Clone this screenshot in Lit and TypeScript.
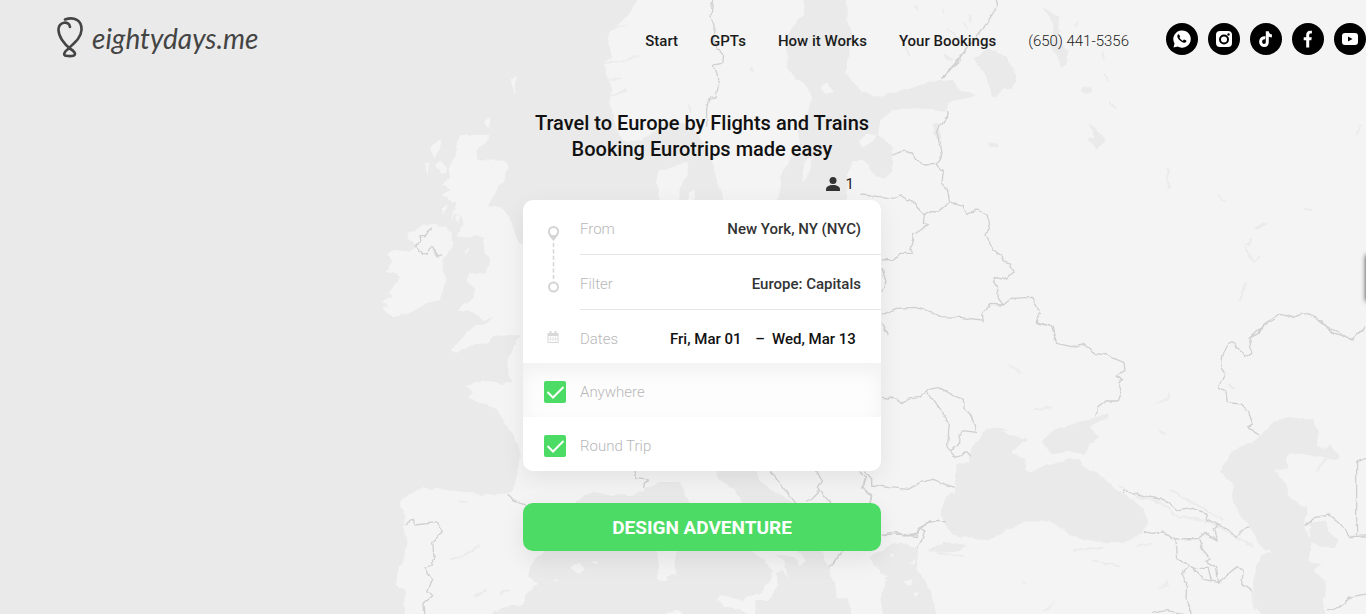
import { LitElement, html, css, svg } from "lit";
import { customElement, state } from "lit/decorators.js";

@customElement("europe-map")
class EuropeMap extends LitElement {
  static styles = css`
    :host { display: block; }
    svg { display: block; width: 100%; height: 100%; }
    .land { fill: #f4f4f4; }
    .sea { fill: #eaeaea; }
    .border { fill: none; stroke: #d0d0d0; stroke-width: 4; stroke-linejoin: round; }
    .relief { fill: #ededed; }
    .ridge { fill: none; stroke: #ebebeb; stroke-width: 6; }
  `;
  render() {
    return html`<svg viewBox="0 0 1366 614" preserveAspectRatio="xMidYMid slice" aria-hidden="true">
      <defs>
        <filter id="coast" x="0" y="0" width="100%" height="100%" filterUnits="objectBoundingBox">
          <feTurbulence type="fractalNoise" baseFrequency="0.11" numOctaves="2" seed="4" result="n" />
          <feDisplacementMap in="SourceGraphic" in2="n" scale="5" xChannelSelector="R" yChannelSelector="G" />
          <feGaussianBlur stdDeviation="0.4" />
        </filter>
      </defs>
      <rect class="sea" width="1366" height="614" />
      <g filter="url(#coast)">
        <rect class="sea" x="-20" y="-20" width="1406" height="654" />
        <path class="land" d="M1386,-20 845,-20 847,20 853,37 845,73 860,90 873,97 893,93 927,82 953,80 960,90 977,96 948,102 945,112 920,108 893,110 880,121 878,135 892,146 892,172 884,180 872,172 865,160 852,160 848,173 847,205 523,330 507,360 509,375 512,380 503,385 485,380 464,387 473,392 468,398 483,403 498,410 505,425 518,443 520,453 517,477 512,493 483,495 470,493 448,490 423,488 410,493 399,502 405,517 403,527 407,543 403,560 397,573 396,587 405,590 403,634 480,634 493,612 510,605 523,605 527,593 537,585 530,577 530,565 542,553 555,530 577,500 594,492 613,495 633,495 647,488 660,482 680,482 688,500 700,520 740,545 753,551 765,562 773,570 770,580 763,590 755,600 770,600 778,585 775,573 783,570 788,580 785,562 775,555 793,556 800,565 806,560 795,548 760,525 742,505 735,490 718,480 715,465 755,465 760,481 773,491 790,501 815,530 822,551 833,580 847,597 857,634 1386,634Z" />
        <path class="land" d="M643,-20 633,10 621,23 613,28 607,38 612,57 603,63 607,77 613,87 610,100 613,117 618,133 627,142 640,140 657,130 673,118 693,128 707,147 712,163 717,180 723,200 730,215 770,215 777,200 783,170 800,147 798,130 813,100 807,87 793,75 787,67 786,37 803,13 805,-20Z" />
        <path class="land" d="M657,182 660,170 687,162 688,173 680,187 678,200 675,215 660,215Z M688,193 695,190 694,203 688,202Z M803,162 812,158 808,175 803,182Z M858,141 866,135 877,134 872,142 862,148Z M820,87 828,83 834,92 825,94Z" />
        <g transform="translate(360 80) scale(.3333)">
          <path class="land" d="M300,165 385,165 380,185 350,210 345,240 435,242 443,260 430,300 400,345 385,380 420,380 445,405 460,450 475,485 560,540 550,640 500,690 490,765 450,765 400,770 385,790 350,792 320,800 290,815 272,812 320,760 345,735 380,735 400,712 370,720 330,695 292,688 340,655 345,620 320,605 325,580 380,580 390,545 370,510 375,475 345,465 320,475 295,465 310,420 285,400 270,430 290,370 245,345 270,330 250,310 270,290 265,260 285,230 290,190Z" />
          <path class="land" d="M150,480 140,460 205,432 260,440 282,490 260,525 245,540 257,600 240,660 200,670 150,700 100,712 65,685 85,680 62,665 100,650 85,640 125,590 80,575 95,545 78,520 105,510 150,515 170,490Z" />
          <path class="land" d="M210,200 245,178 240,205 222,235Z M195,250 207,248 203,285Z M225,255 245,240 262,275 245,285Z M245,385 270,370 250,405Z M285,410 300,405 292,430Z M315,515 330,505 322,527Z M375,125 390,112 388,145Z M455,0 470,-10 465,45Z" />
          <path class="border" d="M212,443 195,470 180,470 183,490 163,495 185,520 203,522 212,500 232,528 246,524" />
        </g>
        <path class="land" d="M658,545 677,545 675,575 669,576 667,581 658,580Z M717,600 722,595 740,600 757,595 755,606 760,630 745,612 725,606Z M570,568 580,563 585,569 580,574Z M590,562 597,561 597,564Z M553,581 557,578 557,581Z M665,614 675,610 684,614Z" />
        <g transform="translate(860 60) scale(.3333)">
          <path class="sea" d="M685,190 705,205 738,240 715,265 682,240 705,232Z M215,195 238,190 245,240 228,235Z M1180,510 1205,485 1222,490 1195,508Z M1155,555 1180,530 1172,555Z" />
          <ellipse class="sea" cx="400" cy="253" rx="15" ry="9" /><ellipse class="sea" cx="680" cy="90" rx="16" ry="11" />
          <path class="ridge" d="M735,40 747,65 M752,125 770,148 M925,325 920,350 930,385 M1155,560 1180,605 1200,585 M1160,670 1140,720 M1075,408 1095,425 M1330,447 1360,450 M1500,195 1490,225" />
          <path class="border" d="M300,0 247,57 M262,152 265,165 230,210 240,260 245,290 228,313 250,335 245,370 258,385 266,425 240,453 215,452 193,465 160,430 120,405 105,415 60,410 0,405 M95,288 135,270 165,290 190,315 228,313 M266,425 310,440 320,460 350,450 382,468 388,505 378,528 400,570 428,590 425,605 450,612 465,635 440,660 405,652 400,665 412,680 415,715 430,735 455,715 515,712 540,755 530,765 535,790 580,800 587,840 M193,465 190,490 203,495 160,525 150,570 158,580 120,580 100,598 66,600 M66,625 78,665 66,695 M66,765 110,745 165,742 220,758 245,770 300,772 365,780 370,790 368,765 390,733 430,735 M66,790 85,825 M1165,838 1200,805 1260,760 1300,772 1330,758 1370,775 1425,820 1475,838 1518,805" />
        </g>
        <g transform="translate(860 0) scale(.3333)">
          <path class="sea" d="M345,180 380,145 440,170 470,230 455,268 435,268 405,292 395,285 380,230Z M545,20 595,50 600,90 590,120 625,150 622,185 600,205 590,165 560,130 582,110 580,70Z M250,160 285,175 265,182Z M595,195 620,180 605,200Z" />
          <path class="ridge" d="M165,15 172,30 M245,25 252,40 M315,65 325,85 M330,45 333,65 M265,90 300,115 M140,140 148,170 M730,155 732,180 M648,65 647,80" />
          <path class="border" d="M405,-20 413,18 370,85 247,237" />
        </g>
        <g transform="translate(860 320) scale(.3333)">
          <path class="sea" d="M380,330 400,322 445,328 425,335 505,360 455,395 495,418 500,450 515,462 540,440 580,432 630,415 660,418 670,440 720,465 785,522 825,545 855,570 862,610 850,640 790,665 710,668 640,650 580,610 565,602 490,608 440,630 400,658 340,655 280,645 258,620 240,577 260,525 285,520 285,470 295,430 325,430 335,385Z" />
          <path class="sea" d="M545,365 575,335 640,312 700,293 750,283 745,295 690,320 718,350 690,372 670,402 630,395 575,403Z M205,690 250,665 320,675 300,695 240,698Z" />
          <path class="sea" d="M1200,350 1240,305 1285,292 1360,300 1375,340 1370,375 1395,390 1410,375 1440,410 1425,420 1350,405 1290,400 1278,420 1285,445 1240,452 1270,475 1285,530 1340,565 1335,620 1355,670 1345,720 1385,735 1365,755 1400,785 1392,840 1400,930 1235,930 1180,850 1180,780 1200,705 1238,698 1200,680 1190,650 1135,575 1120,540 1118,490 1080,455 1115,395Z M1350,610 1395,600 1410,640 1435,660 1425,682 1385,680 1350,670Z" />
          <path class="sea" d="M50,702 10,710 20,732 50,750 80,782 60,832 80,940 240,940 222,850 200,790 170,750 175,685 130,668 90,675Z" />
          <path class="land" d="M85,705 105,700 100,712Z M150,730 165,720 165,735Z M130,785 155,778 150,800Z M20,800 50,815 30,830Z M160,820 175,815 170,830Z" />
          <path class="relief" d="M435,130 465,140 488,160 465,155Z M880,255 915,235 930,205 925,240Z M895,805 925,780 930,800Z M485,785 500,790 492,802Z M545,875 585,840 570,870Z" />
          <path class="ridge" d="M520,268 575,262 M1105,190 1125,208 M895,335 915,343 M1400,415 1370,455 M780,500 830,530 900,545 950,590 1040,600 1140,660 1180,680 M930,510 1020,560 1090,600 M230,700 310,710 M640,690 730,680 M700,720 780,740 M830,680 880,670 M1175,810 1185,870" />
          <path class="border" d="M530,5 575,20 590,70 635,80 675,70 700,100 740,105 792,128 795,150 770,168 788,178 775,190 785,215 775,243 735,243 712,262 708,290 M66,232 110,237 122,250 140,238 180,232 205,208 240,202 275,225 310,238 312,265 328,280 345,310 350,337 310,332 298,345 295,375 270,393 M200,212 235,262 268,308 262,385 285,410 320,398 333,412 M15,455 35,480 35,495 90,503 145,508 180,487 220,478 255,492 283,502 M15,475 10,495 35,530 30,545 M66,643 105,635 140,648 178,642 175,625 215,605 258,605 M178,625 195,630 183,665 172,683 M787,522 793,512 860,530 915,540 955,572 1000,565 1038,580 1040,597 1085,620 1130,652 1165,617 M855,635 880,640 905,632 945,660 950,715 1000,745 1030,778 1075,787 1135,740 1150,755 1145,790 1175,812 M940,657 1015,655 1035,640 1075,660 1060,630 1075,615 M1015,655 1030,690 1050,715 1035,725 1070,745 1075,785 M985,740 965,760 980,790 978,840 995,882 M1000,745 1045,745 1055,785 M875,880 920,872 970,880 M1245,0 1200,25 1195,40 1168,55 1175,98 1155,110 1120,68 1105,75 1088,108 1085,140 1095,160 1075,203 1098,215 1102,248 1145,252 1165,275 1180,315 1162,322 1200,347 M1383,0 1400,20 1425,30 1475,60 1518,20 M1518,415 1490,425 1490,645 M1335,620 1365,592 1410,585 1440,610 1470,650 1518,648 M1400,873 1435,862 1475,830 1518,822" />
        </g>
        <g transform="translate(600 464) scale(.3333)">
          <path class="land" d="M690,290 740,262 800,270 845,330 870,340 840,350 790,340 830,400 840,450 760,450 740,400 710,400 705,350Z" />
          <path class="border" d="M105,20 110,40 142,45 130,72 M510,20 545,65 585,115 M650,20 665,50 655,75 690,115 M655,80 620,115 M725,262 700,300 685,312 M775,22 800,40 788,70 815,100 810,115 M845,212 900,210 950,218 970,185 1020,170" />
        </g>
        <g transform="translate(360 360) scale(.3333)">
          <path class="border" d="M132,495 160,478 165,495 230,488 250,515 218,545 222,590 213,620 192,625 215,660 200,695 215,710 192,730 197,790 M443,403 465,422 495,433" />
          <path class="ridge" d="M270,598 310,590 360,555 M300,425 320,425 M345,710 380,690 M420,700 450,690" />
        </g>
        <g transform="translate(440 0) scale(.3333)">
          <path class="border" d="M820,-20 813,50 825,90 820,130 848,165 845,190 823,195 838,245 828,290 805,300 800,330 800,380" />
          <path class="ridge" d="M490,190 560,180 600,165 M510,240 545,235 M515,290 560,270 M520,85 560,75 M740,310 755,335 M930,205 942,212" />
        </g>
      </g>
    </svg>`;
  }
}

const socials = [
  { name: "WhatsApp", art: svg`<path fill="#fff" d="M16 7.500a8.600 8.600 0 0 0-7.500 12.900L7.500 24.600l4.300-1.100A8.600 8.600 0 1 0 16 7.500z"/><path fill="#000" d="M12.900 11.300c-.4-.3-1.200 0-1.500.9-.5 1.500.5 3.300 2 4.900s3.500 2.900 5.200 2.600c1.200-.2 1.800-1 1.800-1.900 0-.3-2.200-1.400-2.500-1.200l-1 1.100c-.3.200-3.200-2-3.400-3.300l.7-1z"/>` },
  { name: "Instagram", art: svg`<rect x="8" y="8" width="16" height="16" rx="4" fill="#fff"/><circle cx="16" cy="16.500" r="4" fill="none" stroke="#000" stroke-width="2"/><circle cx="20.500" cy="11.500" r="1.200" fill="#000"/>` },
  { name: "TikTok", art: svg`<path fill="none" stroke="#fff" stroke-width="3" d="M15.300 14.700c-6-.6-6 7.800-1.300 7.800 2.200 0 3.300-1.500 3.300-3.300V8.300c.3 2.600 2 4.400 4.600 4.600"/>` },
  { name: "Facebook", art: svg`<path fill="#fff" d="M14.200 24.500v-7.300h-2.500v-2.900h2.500v-2.200c0-2.700 1.400-4.300 4-4.300.9 0 1.700.1 1.700.1v2.700h-1.100c-1.200 0-1.600.7-1.600 1.500v2.200h2.600l-.5 2.900h-2.100v7.300z"/>` },
  { name: "YouTube", art: svg`<rect x="8" y="10" width="16" height="12" rx="3" fill="#fff"/><path d="M14 13.400v5.200l4.500-2.600z"/>` },
];

@customElement("app-root")
class AppRoot extends LitElement {
  @state() private anywhere = true;
  @state() private roundTrip = true;

  static styles = css`
    :host { display: block; position: relative; min-height: 100vh; overflow: hidden; font-family: Roboto, "Liberation Sans", sans-serif; color: #111; background: #eaeaea; }
    * { box-sizing: border-box; }
    a { color: inherit; text-decoration: none; }
    input, button { font: inherit; color: inherit; border: 0; background: none; padding: 0; margin: 0; }
    .map { position: absolute; inset: 0; }
    .page { position: relative; }
    header { display: flex; align-items: center; height: 80px; padding-left: 56px; }
    .logo { display: flex; align-items: center; gap: 8px; color: #444; font: italic 28px Lato, sans-serif; }
    .logo svg { display: block; width: 28px; height: 42px; margin-bottom: 6px; }
    .logo span { margin-bottom: 4px; }
    nav { display: flex; gap: 32px; margin-left: auto; font-size: 15px; font-weight: 500; white-space: nowrap; color: #1c1c1c; padding-top: 1px; }
    .phone { font-weight: 300; }
    .social { display: flex; gap: 10px; margin: 0 0 2px 37px; }
    .social a, .social svg { display: block; width: 32px; height: 32px; }
    main { display: grid; justify-content: center; grid-template-columns: minmax(0, 358px); padding: 30px 0 48px 38px; }
    h1 { margin: 0; font-size: 20px; line-height: 26px; font-weight: 500; text-align: center; }
    .people { justify-self: end; display: flex; align-items: center; gap: 6px; height: 38px; padding: 6px 27px 0 0; font-size: 15px; font-weight: 400; color: #222; }
    .people svg { display: block; width: 14px; height: 14px; }
    .card { border-radius: 10px; background: #fff; box-shadow: 0 8px 24px rgba(0, 0, 0, 0.07); overflow: hidden; font-size: 15px; }
    .route { display: grid; grid-template-columns: 57px minmax(0, 1fr); }
    .route > svg { display: block; width: 57px; height: 110px; grid-row: span 2; }
    .field { display: flex; align-items: center; height: 55px; padding: 4px 20px 0 0; border-bottom: 1px solid #e6e6e6; }
    .field label, .dates label, .check { color: #b8b8b8; font-size: 15px; font-weight: 300; }
    .field input { flex: 1; min-width: 0; text-align: right; font-weight: 500; color: #333; }
    .dates { display: grid; grid-template-columns: 57px 1fr 78px 24px 89px; align-items: center; height: 53px; padding: 4px 20px 0 0; font-weight: 500; color: #111; }
    .dates svg { display: block; width: 13px; height: 13px; margin: 0 0 2px 24px; }
    .dates input { min-width: 0; width: 100%; }
    .dates span { text-align: center; }
    .check { display: flex; align-items: center; gap: 14px; height: 54px; padding: 4px 21px 0; }
    .check.shaded { background: #fdfdfd; box-shadow: inset 0 8px 20px rgba(0, 0, 0, 0.05); }
    .check input { appearance: none; display: block; width: 22px; height: 22px; border-radius: 2px; border: 1px solid #ccc; }
    .check input:checked { border: 0; background: #4cdb64 url("data:image/svg+xml,%3Csvg xmlns='http://www.w3.org/2000/svg' viewBox='0 0 22 22'%3E%3Cpath d='M3.500 11l5.500 5.500L19.500 6' fill='none' stroke='white' stroke-width='2'/%3E%3C/svg%3E"); }
    .go { height: 48px; margin-top: 32px; border-radius: 10px; background: #4cdb64; color: #fff; font-size: 19px; font-weight: 700; box-shadow: 0 8px 24px rgba(0, 0, 0, 0.08); cursor: pointer; }
    .tab { position: absolute; right: -8px; top: 255px; width: 8px; height: 46px; box-shadow: 0 0 5px rgba(0, 0, 0, 0.8); }
  `;

  render() {
    return html`
      <europe-map class="map"></europe-map>
      <div class="page">
        <header>
          <a class="logo" href="#">
            <svg viewBox="0 0 28 42" fill="none" stroke="#444" stroke-width="2.600" stroke-linecap="round" aria-hidden="true">
              <path d="M9 3.500C18 .500 26 4 25.500 14C25 22 18 27 11.500 33.500C8 36 7 39.500 10 39.800C13 40.200 16 40.200 18 39.500C20.500 38 18 35 14.500 33C8 28 2 20 2.500 13C3 6 13 4 14 11" />
            </svg>
            <span>eightydays.me</span>
          </a>
          <nav>
            <a href="#">Start</a><a href="#">GPTs</a><a href="#">How it Works</a><a href="#">Your Bookings</a>
            <a class="phone" href="tel:+16504415356">(650) 441-5356</a>
          </nav>
          <div class="social">
            ${socials.map((s) => html`<a href="#" aria-label=${s.name}><svg viewBox="0 0 32 32"><circle cx="16" cy="16" r="16" />${s.art}</svg></a>`)}
          </div>
        </header>
        <main>
          <h1>Travel to Europe by Flights and Trains<br />Booking Eurotrips made easy</h1>
          <button class="people" aria-label="Passengers: 1">
            <svg viewBox="0 0 14 14" fill="#333"><circle cx="7" cy="3.500" r="3.500" /><path d="M0 14V12.500C0 9.500 3 8 7 8s7 1.500 7 4.500V14z" /></svg>1
          </button>
          <div class="card">
            <div class="route">
              <svg viewBox="0 0 57 110" fill="none" stroke="#d4d4d6" stroke-width="2" aria-hidden="true">
                <path fill="#d4d4d6" stroke="none" fill-rule="evenodd" d="M30.500 26a5.500 5.500 0 0 1 5.500 5.500c0 3.500-3 6.500-5.500 9.500c-2.500-3-5.500-6-5.500-9.500a5.500 5.500 0 0 1 5.500-5.500zm0 2a3.600 3.600 0 1 0 0 7.200a3.600 3.600 0 0 0 0-7.200z" />
                <path d="M30.500 43V82" stroke-dasharray="4 2.400" stroke-width="1.500" />
                <circle cx="30.500" cy="87" r="4.500" />
              </svg>
              <div class="field"><label for="from">From</label><input id="from" value="New York, NY (NYC)" /></div>
              <div class="field"><label for="filter">Filter</label><input id="filter" value="Europe: Capitals" /></div>
            </div>
            <div class="dates">
              <svg viewBox="0 0 13 13" fill="none" stroke="#d8d8da" aria-hidden="true"><rect x="1" y="2.500" width="10" height="9" /><path d="M3.500 0v3M8.500 0v3M1 4h10" stroke-width="2" /><path d="M3.500 5.500v5M6 5.500v5M8.500 5.500v5M1 8h10" stroke-opacity=".6" /></svg>
              <label for="start">Dates</label>
              <input id="start" value="Fri, Mar 01" />
              <span>–</span>
              <input aria-label="Return date" value="Wed, Mar 13" />
            </div>
            <label class="check shaded"><input type="checkbox" .checked=${this.anywhere} @change=${() => (this.anywhere = !this.anywhere)} />Anywhere</label>
            <label class="check"><input type="checkbox" .checked=${this.roundTrip} @change=${() => (this.roundTrip = !this.roundTrip)} />Round Trip</label>
          </div>
          <button class="go">DESIGN ADVENTURE</button>
        </main>
      </div>
      <div class="tab"></div>
    `;
  }
}
